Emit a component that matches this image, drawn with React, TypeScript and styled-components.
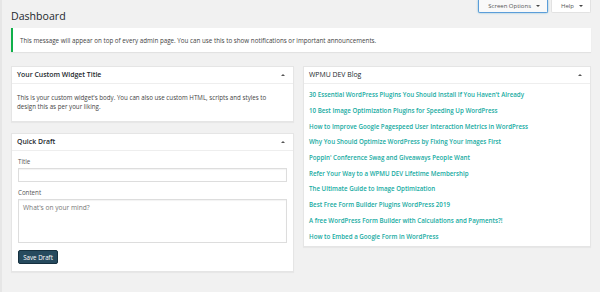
import styled, { createGlobalStyle } from 'styled-components';

const GlobalStyle = createGlobalStyle`
  html, body {
    margin: 0;
    padding: 0;
    background: #f1f1f1;
  }
  body {
    font-family: 'Open Sans', 'Noto Sans', sans-serif;
    color: #444;
  }
  * {
    box-sizing: border-box;
  }
`;

const Page = styled.div`
  width: 600px;
  height: 292px;
  padding: 0 9px 0 9px;
  border-left: 2px solid #e6e6e6;
  overflow: hidden;
`;

const Header = styled.div`
  display: flex;
  justify-content: space-between;
  align-items: flex-start;
  height: 28px;
`;

const Title = styled.h1`
  margin: 0;
  padding-top: 9px;
  font-size: 10.6px;
  line-height: 15px;
  font-weight: 400;
  color: #23282d;
`;

const MetaLinks = styled.div`
  display: flex;
  gap: 3px;
`;

const MetaButton = styled.button<{ active?: boolean }>`
  height: 13px;
  padding: 0 7px 0 9px;
  display: flex;
  align-items: center;
  gap: 5px;
  border: 1px solid ${({ active }) => (active ? '#5b9dd9' : '#e2e2e2')};
  border-top: none;
  border-radius: 0 0 2px 2px;
  background: ${({ active }) => (active ? '#f9f9f9' : '#fff')};
  box-shadow: ${({ active }) => (active ? '0 0 2px rgba(30,140,190,0.6)' : 'none')};
  font-family: inherit;
  font-size: 6px;
  color: #555;
  cursor: pointer;
`;

const Caret = styled.span`
  width: 0;
  height: 0;
  border-left: 2px solid transparent;
  border-right: 2px solid transparent;
  border-top: 2.5px solid #444;
`;

const Notice = styled.div`
  height: 24px;
  display: flex;
  align-items: center;
  background: #fff;
  border-left: 2px solid #10b04a;
  box-shadow: 0 1px 1px rgba(0, 0, 0, 0.06);
  padding-left: 7px;
  font-size: 6.25px;
  color: #444;
`;

const Columns = styled.div`
  display: grid;
  grid-template-columns: 283px 288px;
  gap: 9px;
  margin-top: 14px;
  align-items: start;
`;

const Column = styled.div`
  display: flex;
  flex-direction: column;
  gap: 11px;
`;

const Widget = styled.section`
  background: #fff;
  border: 1px solid #e5e5e5;
  box-shadow: 0 1px 1px rgba(0, 0, 0, 0.04);
`;

const WidgetHead = styled.div`
  height: 16.5px;
  display: flex;
  align-items: center;
  justify-content: space-between;
  padding: 0 8px 0 5px;
  border-bottom: 1px solid #eee;
`;

const WidgetTitle = styled.h2<{ light?: boolean }>`
  margin: 0;
  font-size: 6.9px;
  font-weight: ${({ light }) => (light ? 400 : 600)};
  color: #23282d;
`;

const Toggle = styled.span`
  width: 0;
  height: 0;
  border-left: 2px solid transparent;
  border-right: 2px solid transparent;
  border-bottom: 2.5px solid #555;
`;

const WidgetBody = styled.div`
  padding: 9px 5px 9.5px;
  font-size: 6.2px;
  line-height: 9.5px;
  color: #444;
`;

const Form = styled.form`
  padding: 6.5px 6px 7px;
  display: flex;
  flex-direction: column;
`;

const Label = styled.label`
  font-size: 6.2px;
  line-height: 9px;
  color: #555;
  margin-bottom: 2px;
`;

const TextInput = styled.input`
  height: 14px;
  width: 100%;
  border: 1px solid #ddd;
  box-shadow: inset 0 1px 1px rgba(0, 0, 0, 0.05);
  margin: 0 0 6px;
  font-family: inherit;
`;

const TextArea = styled.textarea`
  height: 44px;
  width: 100%;
  border: 1px solid #ddd;
  box-shadow: inset 0 1px 1px rgba(0, 0, 0, 0.05);
  resize: none;
  padding: 3px 4px;
  margin: 0 0 7px;
  font-family: inherit;
  font-size: 6.6px;
  color: #555;
  display: block;
  &::placeholder {
    color: #777;
  }
`;

const SaveButton = styled.button`
  align-self: flex-start;
  height: 14px;
  width: 40px;
  padding: 0;
  background: #264a5e;
  border: 1px solid #15303f;
  border-radius: 2px;
  color: #fff;
  font-family: inherit;
  font-size: 6.2px;
  cursor: pointer;
`;

const LinkList = styled.ul`
  list-style: none;
  margin: 0;
  padding: 3.5px 5px 2.5px;
`;

const LinkItem = styled.li`
  height: 15.7px;
  display: flex;
  align-items: center;
`;

const Link = styled.a`
  font-size: 6.2px;
  font-weight: 600;
  color: #17aba2;
  text-decoration: none;
`;

const posts = [
  "30 Essential WordPress Plugins You Should Install If You Haven't Already",
  '10 Best Image Optimization Plugins for Speeding Up WordPress',
  'How to Improve Google Pagespeed User Interaction Metrics in WordPress',
  'Why You Should Optimize WordPress by Fixing Your Images First',
  "Poppin' Conference Swag and Giveaways People Want",
  'Refer Your Way to a WPMU DEV Lifetime Membership',
  'The Ultimate Guide to Image Optimization',
  'Best Free Form Builder Plugins WordPress 2019',
  'A free WordPress Form Builder with Calculations and Payments?!',
  'How to Embed a Google Form in WordPress',
];

const App = () => {
  return (
    <>
      <GlobalStyle />
      <Page>
        <Header>
          <Title>Dashboard</Title>
          <MetaLinks>
            <MetaButton active>
              Screen Options <Caret />
            </MetaButton>
            <MetaButton>
              Help <Caret />
            </MetaButton>
          </MetaLinks>
        </Header>
        <Notice>
          This message will appear on top of every admin page. You can use this to show notifications or important
          announcements.
        </Notice>
        <Columns>
          <Column>
            <Widget>
              <WidgetHead>
                <WidgetTitle>Your Custom Widget Title</WidgetTitle>
                <Toggle />
              </WidgetHead>
              <WidgetBody>
                This is your custom widget's body. You can also use custom HTML, scripts and styles to
                <br />
                design this as per your liking.
              </WidgetBody>
            </Widget>
            <Widget>
              <WidgetHead>
                <WidgetTitle>Quick Draft</WidgetTitle>
                <Toggle />
              </WidgetHead>
              <Form onSubmit={(e) => e.preventDefault()}>
                <Label htmlFor="draft-title">Title</Label>
                <TextInput id="draft-title" type="text" />
                <Label htmlFor="draft-content">Content</Label>
                <TextArea id="draft-content" placeholder="What's on your mind?" />
                <SaveButton type="submit">Save Draft</SaveButton>
              </Form>
            </Widget>
          </Column>
          <Column>
            <Widget>
              <WidgetHead>
                <WidgetTitle light>WPMU DEV Blog</WidgetTitle>
                <Toggle />
              </WidgetHead>
              <LinkList>
                {posts.map((post) => (
                  <LinkItem key={post}>
                    <Link href="#">{post}</Link>
                  </LinkItem>
                ))}
              </LinkList>
            </Widget>
          </Column>
        </Columns>
      </Page>
    </>
  );
};

export default App;
